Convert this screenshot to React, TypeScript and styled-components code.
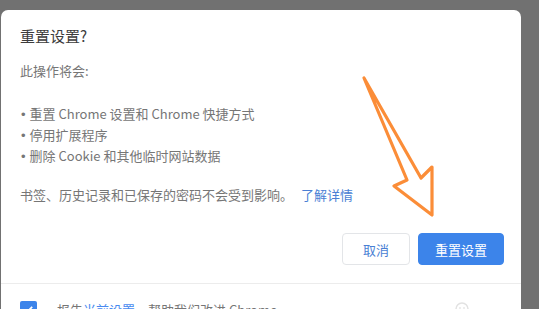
import styled, { createGlobalStyle } from "styled-components";

const GlobalStyle = createGlobalStyle`
  html, body {
    margin: 0;
    padding: 0;
    height: 100%;
    overflow: hidden;
    background: #717171;
  }
  body {
    font-family: "Noto Sans CJK SC", "Liberation Sans", sans-serif;
  }
`;

const Page = styled.div`
  position: relative;
  width: 539px;
  height: 309px;
  padding: 10px 0 0 1px;
  box-sizing: border-box;
  overflow: hidden;
`;

const Dialog = styled.div`
  width: 520px;
  height: 330px;
  background: #fff;
  border-radius: 7px 7px 0 0;
  display: flex;
  flex-direction: column;
`;

const Body = styled.div`
  padding: 14px 17px 0 19px;
  display: flex;
  flex-direction: column;
`;

const Title = styled.h2`
  margin: 0;
  font-size: 15px;
  font-weight: 400;
  line-height: 24px;
  color: #3c3c3c;
`;

const Text = styled.p<{ $top?: number }>`
  margin: ${(p) => p.$top ?? 0}px 0 0;
  font-size: 13px;
  line-height: 20px;
  color: #767676;
`;

const List = styled.ul`
  list-style: none;
  margin: 23px 0 0;
  padding: 0;
`;

const Item = styled.li`
  font-size: 13px;
  line-height: 20px;
  color: #767676;
  &::before {
    content: "•";
    font-family: "Liberation Sans", sans-serif;
    margin-right: 4px;
    margin-left: 1px;
  }
`;

const Link = styled.a`
  color: #4a7fd4;
  text-decoration: none;
  margin-left: 8px;
`;

const InlineLink = styled.a`
  color: #4a8af0;
  text-decoration: none;
`;

const Actions = styled.div`
  display: flex;
  justify-content: flex-end;
  gap: 8px;
  margin-top: 28px;
  padding-bottom: 18px;
`;

const Button = styled.button<{ $primary?: boolean }>`
  height: 32px;
  padding: 0 ${(p) => (p.$primary ? 16 : 20)}px;
  border-radius: 4px;
  font-family: inherit;
  font-size: 13px;
  border: 1px solid ${(p) => (p.$primary ? "#3c84ea" : "#e3e5e8")};
  background: ${(p) => (p.$primary ? "#3c84ea" : "#fff")};
  color: ${(p) => (p.$primary ? "#fff" : "#4a7fd4")};
`;

const Footer = styled.div`
  border-top: 1px solid #ececec;
  display: flex;
  align-items: center;
  padding: 16px 50px 0 19px;
  gap: 20px;
`;

const Check = styled.span`
  width: 17px;
  height: 17px;
  border-radius: 2px;
  background: #3c84ea;
  display: flex;
  align-items: center;
  justify-content: center;
  flex-shrink: 0;
`;

const FooterText = styled.span`
  font-size: 13px;
  color: #767676;
  flex: 1;
`;

const Arrow = styled.svg`
  position: absolute;
  left: 0;
  top: 0;
  pointer-events: none;
`;

export default function App() {
  return (
    <>
      <GlobalStyle />
      <Page>
        <Dialog>
          <Body>
            <Title>重置设置?</Title>
            <Text $top={13}>此操作将会:</Text>
            <List>
              <Item>重置 Chrome 设置和 Chrome 快捷方式</Item>
              <Item>停用扩展程序</Item>
              <Item>删除 Cookie 和其他临时网站数据</Item>
            </List>
            <Text $top={18}>
              书签、历史记录和已保存的密码不会受到影响。
              <Link href="#">了解详情</Link>
            </Text>
            <Actions>
              <Button>取消</Button>
              <Button $primary>重置设置</Button>
            </Actions>
          </Body>
          <Footer>
            <Check>
              <svg width="11" height="11" viewBox="0 0 12 12">
                <path d="M2 6.5l2.5 2.5L10 3" fill="none" stroke="#fff" strokeWidth="2" />
              </svg>
            </Check>
            <FooterText>
              报告<InlineLink href="#">当前设置</InlineLink>，帮助我们改进 Chrome
            </FooterText>
            <svg width="18" height="18" viewBox="0 0 18 18">
              <path d="M3 18V8a6 6 0 0 1 12 0v10" fill="none" stroke="#e2e2e2" strokeWidth="1.5" />
              <path d="M7 6v12M11 6v12" fill="none" stroke="#e2e2e2" strokeWidth="1.2" />
            </svg>
          </Footer>
        </Dialog>
        <Arrow width="539" height="309" viewBox="0 0 539 309">
          <path
            d="M364 78 L407 180 L394 186 L432 215 L432 167 L421 178 Z"
            fill="none"
            stroke="#fb8d38"
            strokeWidth="3.2"
            strokeLinejoin="round"
            strokeLinecap="round"
          />
        </Arrow>
      </Page>
    </>
  );
}
